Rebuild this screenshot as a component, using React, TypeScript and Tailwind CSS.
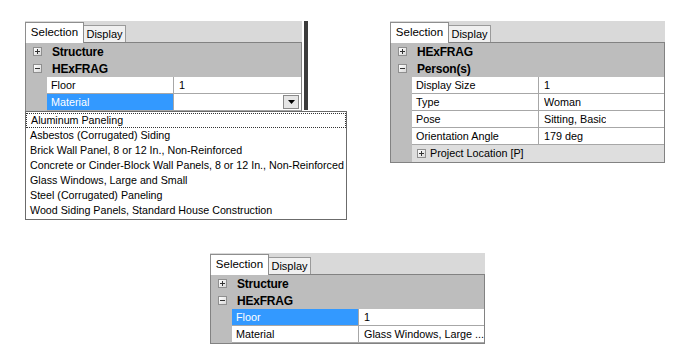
import React from "react";

const FONT = { fontFamily: '"Liberation Sans", Arial, sans-serif' };

function Tabs() {
  return (
    <div className="flex items-end h-[21px] bg-[#d9d9d9]">
      <div className="h-[21px] w-[59px] bg-white border border-b-0 border-[#8e8e8e] flex items-center justify-center text-[11.5px] text-black relative z-10 -mb-px">
        Selection
      </div>
      <div className="h-[17px] w-[42px] bg-[#f0f0f0] border border-l-0 border-b-0 border-[#9a9a9a] flex items-center justify-center text-[11px] text-black">
        Display
      </div>
    </div>
  );
}

function Box({ plus }: { plus: boolean }) {
  return (
    <div className="w-[9px] h-[9px] border border-[#8f8f8f] bg-gradient-to-br from-white to-[#d8d8d8] relative">
      <div className="absolute left-[1px] right-[1px] top-[3px] h-px bg-[#333]" />
      {plus && <div className="absolute top-[1px] bottom-[1px] left-[3px] w-px bg-[#333]" />}
    </div>
  );
}

function Group({ label, plus }: { label: string; plus: boolean }) {
  return (
    <div className="flex h-[17px] items-center bg-[#bdbdbd]">
      <div className="w-[21px] flex justify-center pl-[2px]">
        <Box plus={plus} />
      </div>
      <div className="pl-[5px] font-bold text-[12px] text-black tracking-[-0.2px]">{label}</div>
    </div>
  );
}

function Prop({
  label,
  value,
  selected,
  dropdown,
}: {
  label: string;
  value: string;
  selected?: boolean;
  dropdown?: boolean;
}) {
  return (
    <div className="flex h-[17px]">
      <div className="w-[21px] bg-[#bdbdbd]" />
      <div
        className={
          "w-[127px] border-r border-b border-[#a7a7a7] flex items-center pl-[4px] text-[10.8px] " +
          (selected ? "bg-[#3399ff] text-white" : "bg-white text-black")
        }
      >
        {label}
      </div>
      <div className="flex-1 border-b border-[#a7a7a7] bg-white flex items-center pl-[5px] text-[10.8px] text-black relative">
        <span className="whitespace-nowrap overflow-hidden">{value}</span>
        {dropdown && (
          <div className="absolute right-[2px] top-[1px] w-[16px] h-[14px] bg-[#e6e6e6] border border-[#8a8a8a] flex items-center justify-center">
            <svg width="7" height="4" viewBox="0 0 7 4">
              <path d="M0 0 H7 L3.5 4 Z" fill="#000" />
            </svg>
          </div>
        )}
      </div>
    </div>
  );
}

function SubGroup({ label }: { label: string }) {
  return (
    <div className="flex h-[17px]">
      <div className="w-[21px] bg-[#bdbdbd]" />
      <div className="flex-1 bg-[#dedede] flex items-center pl-[5px] gap-[4px] text-[10.8px] text-black">
        <Box plus />
        <span>{label}</span>
      </div>
    </div>
  );
}

function Panel({ width, children }: { width: number; children: React.ReactNode }) {
  return (
    <div style={{ width }}>
      <Tabs />
      <div className="border border-[#828282] bg-[#bdbdbd]">{children}</div>
    </div>
  );
}

const materials = [
  "Aluminum Paneling",
  "Asbestos (Corrugated) Siding",
  "Brick Wall Panel, 8 or 12 In., Non-Reinforced",
  "Concrete or Cinder-Block Wall Panels, 8 or 12 In., Non-Reinforced",
  "Glass Windows, Large and Small",
  "Steel (Corrugated) Paneling",
  "Wood Siding Panels, Standard House Construction",
];

export default function App() {
  return (
    <div className="w-[693px] h-[359px] bg-white overflow-hidden" style={FONT}>
      <div className="flex items-start pt-[21px] h-[253px]">
        <div className="ml-[25px] relative flex">
          <Panel width={277}>
            <Group label="Structure" plus />
            <Group label="HExFRAG" plus={false} />
            <Prop label="Floor" value="1" />
            <Prop label="Material" value="" selected dropdown />
          </Panel>
          <div className="ml-[2px] w-[4px] h-[89px] bg-[#3c3c3c]" />
          <div className="absolute left-0 top-[90px] w-[322px] border border-[#6b6b6b] bg-white z-20 py-px">
            {materials.map((m, i) => (
              <div
                key={m}
                className={
                  "h-[15px] flex items-center pl-[4px] text-[10.7px] text-black whitespace-nowrap " +
                  (i === 0 ? "border border-dotted border-[#333] pl-[3px]" : "")
                }
              >
                {m}
              </div>
            ))}
          </div>
        </div>
        <div className="ml-[82px]">
          <Panel width={275}>
            <Group label="HExFRAG" plus />
            <Group label="Person(s)" plus={false} />
            <Prop label="Display Size" value="1" />
            <Prop label="Type" value="Woman" />
            <Prop label="Pose" value="Sitting, Basic" />
            <Prop label="Orientation Angle" value="179 deg" />
            <SubGroup label="Project Location [P]" />
          </Panel>
        </div>
      </div>
      <div className="ml-[210px]">
        <Panel width={275}>
          <Group label="Structure" plus />
          <Group label="HExFRAG" plus={false} />
          <Prop label="Floor" value="1" selected />
          <Prop label="Material" value="Glass Windows, Large ..." />
        </Panel>
      </div>
    </div>
  );
}
